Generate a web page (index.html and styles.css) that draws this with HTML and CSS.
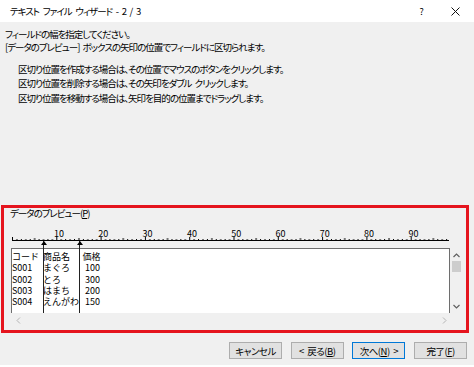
FILE: index.html
```html
<!DOCTYPE html>
<html lang="ja">
<head>
    <meta charset="UTF-8">
    <meta name="viewport" content="width=device-width, initial-scale=1.0">
    <title>テキスト ファイル ウィザード - 2 / 3</title>
    <link rel="stylesheet" href="styles.css">
</head>
<body>

    <div class="dialog">
        <!-- Title bar -->
        <div class="titlebar">
            <span class="title">テキスト ファイル ウィザード - 2 / 3</span>
            <span class="caption-btn help">?</span>
            <span class="caption-btn close">
                <svg width="9" height="9" viewBox="0 0 9 9"><path d="M0.5 0.5 L8.5 8.5 M8.5 0.5 L0.5 8.5" stroke="#111" stroke-width="1"/></svg>
            </span>
        </div>

        <div class="content">
            <!-- Instructions -->
            <div class="intro">
                <p>フィールドの幅を指定してください。</p>
                <p>[データのプレビュー] ボックスの矢印の位置でフィールドに区切られます。</p>
                <ul class="howto">
                    <li>区切り位置を作成する場合は、その位置でマウスのボタンをクリックします。</li>
                    <li>区切り位置を削除する場合は、その矢印をダブル クリックします。</li>
                    <li>区切り位置を移動する場合は、矢印を目的の位置までドラッグします。</li>
                </ul>
            </div>

            <!-- Data preview -->
            <div class="preview-group">
                <div class="group-label">データのプレビュー(<u>P</u>)</div>
                <div class="preview">
                    <svg class="ruler" width="462" height="22" viewBox="0 0 462 22">
                        <defs>
                            <pattern id="ticks" x="8" y="0" width="44.3" height="22" patternUnits="userSpaceOnUse">
                                <rect x="0" y="11" width="1" height="3" fill="#000"/>
                                <rect x="4.43" y="13" width="1" height="1" fill="#000"/>
                                <rect x="8.86" y="13" width="1" height="1" fill="#000"/>
                                <rect x="13.29" y="13" width="1" height="1" fill="#000"/>
                                <rect x="17.72" y="13" width="1" height="1" fill="#000"/>
                                <rect x="22.15" y="12" width="1" height="2" fill="#000"/>
                                <rect x="26.58" y="13" width="1" height="1" fill="#000"/>
                                <rect x="31.01" y="13" width="1" height="1" fill="#000"/>
                                <rect x="35.44" y="13" width="1" height="1" fill="#000"/>
                                <rect x="39.87" y="13" width="1" height="1" fill="#000"/>
                            </pattern>
                        </defs>
                        <rect x="8" y="14" width="437" height="1" fill="#000"/>
                        <rect x="8" y="0" width="437" height="14" fill="url(#ticks)"/>
                        <g class="ruler-nums">
                            <text x="50" y="10.5">10</text>
                            <text x="94.3" y="10.5">20</text>
                            <text x="138.6" y="10.5">30</text>
                            <text x="182.9" y="10.5">40</text>
                            <text x="227.2" y="10.5">50</text>
                            <text x="271.5" y="10.5">60</text>
                            <text x="315.8" y="10.5">70</text>
                            <text x="360.1" y="10.5">80</text>
                            <text x="404.4" y="10.5">90</text>
                        </g>
                    </svg>

                    <div class="grid-box">
                        <div class="data">
                            <div class="row"><span class="c1">コード</span><span class="c2">商品名</span><span class="c3 head">価格</span></div>
                            <div class="row"><span class="c1">S001</span><span class="c2">まぐろ</span><span class="c3">100</span></div>
                            <div class="row"><span class="c1">S002</span><span class="c2">とろ</span><span class="c3">300</span></div>
                            <div class="row"><span class="c1">S003</span><span class="c2">はまち</span><span class="c3">200</span></div>
                            <div class="row"><span class="c1">S004</span><span class="c2">えんがわ</span><span class="c3">150</span></div>
                        </div>
                        <div class="vscroll">
                            <svg width="7" height="5" viewBox="0 0 7 5"><path d="M0.5 4 L3.5 1 L6.5 4" fill="none" stroke="#606060" stroke-width="1.2"/></svg>
                            <div class="thumb"></div>
                            <svg class="down" width="7" height="5" viewBox="0 0 7 5"><path d="M0.5 1 L3.5 4 L6.5 1" fill="none" stroke="#606060" stroke-width="1.2"/></svg>
                        </div>
                        <div class="hscroll">
                            <svg width="5" height="7" viewBox="0 0 5 7"><path d="M4 0.5 L1 3.5 L4 6.5" fill="none" stroke="#b4b4b4" stroke-width="1"/></svg>
                            <svg width="5" height="7" viewBox="0 0 5 7"><path d="M1 0.5 L4 3.5 L1 6.5" fill="none" stroke="#b4b4b4" stroke-width="1"/></svg>
                        </div>
                        <div class="corner"></div>
                    </div>

                    <!-- column break markers -->
                    <div class="break break-a"></div>
                    <div class="break break-b"></div>
                </div>
            </div>

            <!-- Buttons -->
            <div class="buttons">
                <button>キャンセル</button>
                <button>&lt; 戻る(<u>B</u>)</button>
                <button class="default">次へ(<u>N</u>) &gt;</button>
                <button>完了(<u>F</u>)</button>
            </div>
        </div>
    </div>

</body>
</html>
```

FILE: styles.css
```css
body {
    margin: 0;
    padding: 0;
    background-color: #fff;
    font-family: "Noto Sans CJK JP", "Noto Sans", sans-serif;
    color: #000;
}
.dialog {
    width: 474px;
    height: 367px;
    background-color: #fff;
}
.titlebar {
    height: 22px;
    display: flex;
    align-items: center;
    padding-right: 2px;
    background-color: #fff;
}
.title {
    flex: 1;
    padding-left: 10px;
    font-size: 9.5px;
    letter-spacing: -1px;
    word-spacing: 2.5px;
    font-feature-settings: "palt";
}
.caption-btn {
    width: 33.5px;
    height: 22px;
    display: flex;
    align-items: center;
    justify-content: center;
}
.help {
    font-size: 9px;
}
.content {
    height: 343px;
    background-color: #f0f0f0;
}
.intro {
    height: 183px;
    box-sizing: border-box;
    padding: 5.5px 0 0 5px;
    font-size: 9.5px;
    letter-spacing: -1px;
    word-spacing: 2px;
    font-feature-settings: "palt";
}
.intro p {
    margin: 0;
    line-height: 13px;
}
.howto {
    list-style: none;
    margin: 8.25px 0 0;
    padding-left: 13px;
}
.howto li {
    line-height: 14.5px;
}
.preview-group {
    margin-left: 1px;
    width: 468px;
    height: 128px;
    box-sizing: border-box;
    border: 3px solid #e5141e;
}
.group-label {
    height: 18px;
    padding-left: 6px;
    font-size: 9.5px;
    letter-spacing: -1px;
    line-height: 10px;
    font-feature-settings: "palt";
}
.preview {
    position: relative;
}
.ruler {
    display: block;
}
.ruler-nums text {
    font-family: "Noto Sans CJK JP", sans-serif;
    font-size: 9px;
    fill: #000;
}
.grid-box {
    margin-left: 7px;
    width: 451px;
    height: 79px;
    display: grid;
    grid-template-columns: 439px 12px;
    grid-template-rows: 65px 14px;
}
.data {
    background-color: #fff;
    border: 1px solid #6e6e6e;
    border-bottom: none;
    box-sizing: border-box;
    padding-top: 2px;
    font-size: 9px;
}
.row {
    display: flex;
    height: 11.3px;
    line-height: 11.3px;
    white-space: nowrap;
}
.c1 {
    width: 31px;
}
.c2 {
    width: 35.5px;
}
.c3 {
    width: 21.5px;
    text-align: right;
}
.c3.head {
    text-align: left;
    padding-left: 4px;
}
.vscroll {
    display: flex;
    flex-direction: column;
    align-items: center;
    padding-top: 5px;
    box-sizing: border-box;
}
.vscroll .thumb {
    width: 9px;
    height: 11px;
    margin-top: 3px;
    background-color: #cdcdcd;
}
.vscroll .down {
    margin-top: auto;
    margin-bottom: 4px;
}
.hscroll {
    display: flex;
    justify-content: space-between;
    align-items: center;
    padding: 0 3px 0 5px;
}
.break {
    position: absolute;
    top: 15px;
    width: 1px;
    height: 72px;
    background-color: #222;
}
.break::before {
    content: "";
    position: absolute;
    left: -2.5px;
    top: 0;
    border-left: 3px solid transparent;
    border-right: 3px solid transparent;
    border-bottom: 4px solid #000;
}
.break-a {
    left: 39px;
}
.break-b {
    left: 75px;
}
.buttons {
    margin-top: 9px;
    padding-right: 7px;
    display: flex;
    justify-content: flex-end;
    gap: 8.67px;
}
.buttons button {
    width: 53px;
    height: 17px;
    padding: 0;
    background-color: #e1e1e1;
    border: 1px solid #adadad;
    font-family: "Noto Sans CJK JP", sans-serif;
    font-size: 9.5px;
    letter-spacing: -0.5px;
    word-spacing: 2px;
    font-feature-settings: "palt";
    color: #000;
}
.buttons button.default {
    border-color: #0078d7;
}
```
